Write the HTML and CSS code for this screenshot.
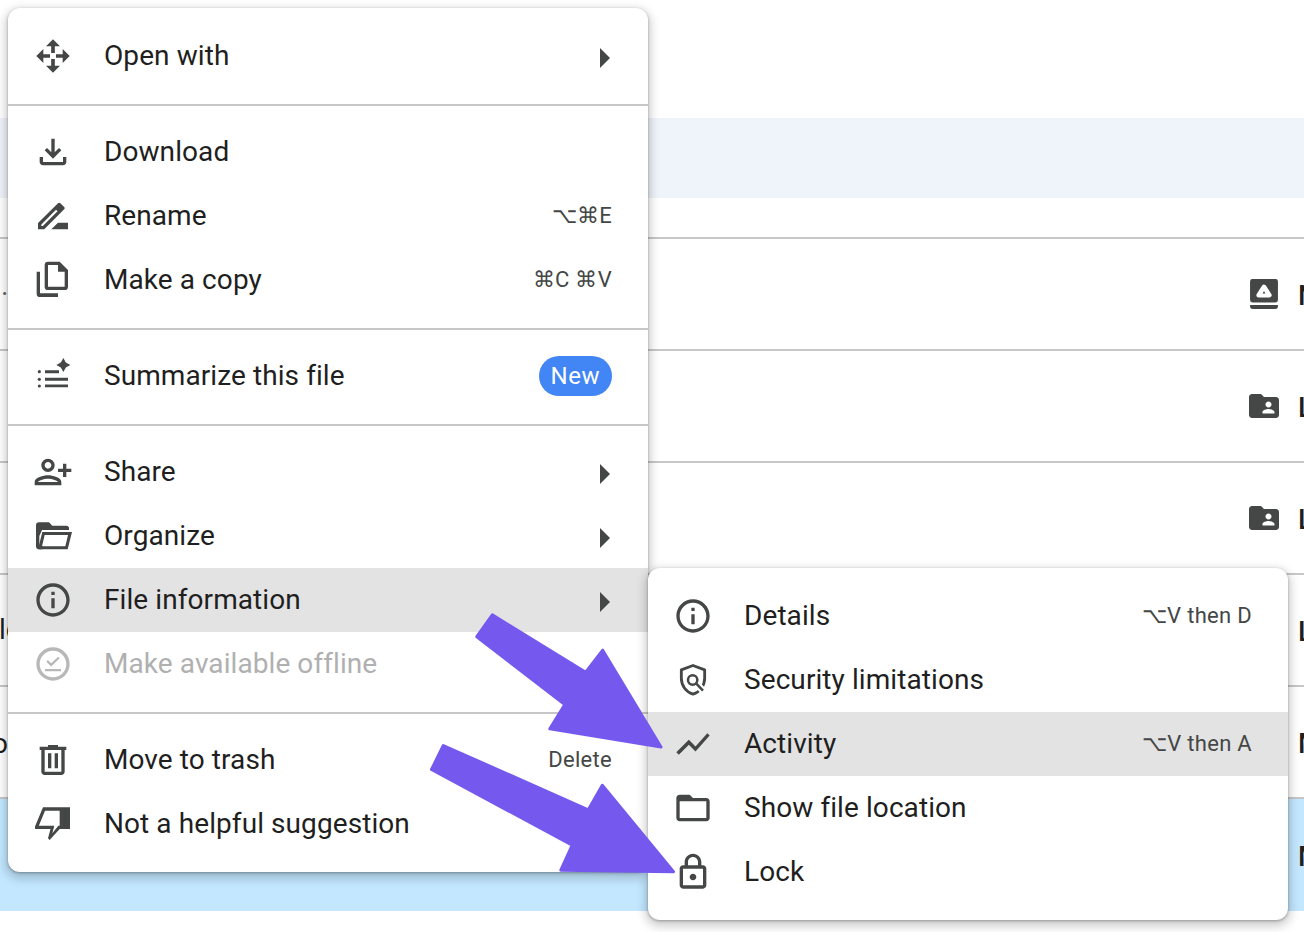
FILE: index.html
```html
<!DOCTYPE html>
<html lang="en">
<head>
<meta charset="utf-8">
<title>File menu</title>
<link rel="stylesheet" href="styles.css">
</head>
<body>
<div class="page">
  <div class="list">
    <div class="band"></div>
    <div class="gap"></div>
    <div class="row"><span class="frag frag-dot">·</span><svg class="row-icon" viewBox="0 0 24 24"><rect x="2.7" y="2" width="18.6" height="15.6" rx="1.6"/><path d="M2.7 19.3h18.6v.9a1.8 1.8 0 0 1-1.8 1.8H4.5a1.8 1.8 0 0 1-1.8-1.8z"/><path class="w" d="M12 7.2 15.600 12.800H8.400z"/><path d="M12 10 12.900 11.600H11.100z"/></svg><span class="cut">N</span></div>
    <div class="row"><span class="frag"></span><svg class="row-icon" viewBox="0 0 24 24"><path d="M20 6h-8l-2-2H4c-1.1 0-1.99.9-1.99 2L2 18c0 1.1.9 2 2 2h16c1.1 0 2-.9 2-2V8c0-1.1-.9-2-2-2zm-5 3c1.1 0 2 .9 2 2s-.9 2-2 2-2-.9-2-2 .9-2 2-2zm4 8h-8v-1c0-1.33 2.67-2 4-2s4 .67 4 2v1z"/></svg><span class="cut">L</span></div>
    <div class="row"><span class="frag"></span><svg class="row-icon" viewBox="0 0 24 24"><path d="M20 6h-8l-2-2H4c-1.1 0-1.99.9-1.99 2L2 18c0 1.1.9 2 2 2h16c1.1 0 2-.9 2-2V8c0-1.1-.9-2-2-2zm-5 3c1.1 0 2 .9 2 2s-.9 2-2 2-2-.9-2-2 .9-2 2-2zm4 8h-8v-1c0-1.33 2.67-2 4-2s4 .67 4 2v1z"/></svg><span class="cut">L</span></div>
    <div class="row"><span class="frag frag-ld">ld</span><span class="spacer"></span><span class="cut">L</span></div>
    <div class="row"><span class="frag frag-o">o</span><span class="spacer"></span><span class="cut">M</span></div>
    <div class="row row-selected"><span class="frag"></span><span class="spacer"></span><span class="cut">M</span></div>
  </div>

  <div class="menu menu-main">
    <section class="group">
      <div class="item"><svg class="icon" viewBox="0 0 24 24"><path d="M12 2 16.200 6.200H13.100V10.200H10.900V6.200H7.800zM12 22 7.800 17.800H10.900V13.800H13.100V17.800H16.200zM2 12 6.200 7.800V10.900H10.200V13.100H6.200V16.200zM22 12 17.800 16.200V13.100H13.800V10.900H17.800V7.800z"/></svg><span class="label">Open with</span><svg class="caret" viewBox="0 0 10 20"><path d="M0 0 10 10 0 20z"/></svg></div>
    </section>
    <hr class="rule">
    <section class="group">
      <div class="item"><svg class="icon" viewBox="0 0 24 24"><path d="M12 16l-5-5 1.4-1.45L11 12.15V4h2v8.15l2.6-2.6L17 11l-5 5zM6 20c-.55 0-1.02-.2-1.41-.59C4.2 19.02 4 18.55 4 18v-3h2v3h12v-3h2v3c0 .55-.2 1.02-.59 1.41-.39.39-.86.59-1.41.59H6z"/></svg><span class="label">Download</span></div>
      <div class="item"><svg class="icon" viewBox="0 0 24 24"><path d="M15 16l-4 4h10v-4z"/><path fill-rule="evenodd" d="M3 16.250 15 4.300c.4-.4 1-.4 1.400 0l2.300 2.300c.4.4.4 1 0 1.400L6.750 20H3zM5 18h.92l8.800-8.800-.92-.92L5 17.080z"/></svg><span class="label">Rename</span><span class="keys">⌥⌘E</span></div>
      <div class="item"><svg class="icon" viewBox="0 0 24 24"><path fill-rule="evenodd" d="M9 1h7l5 5v10a2 2 0 0 1-2 2H9a2 2 0 0 1-2-2V3a2 2 0 0 1 2-2zM9 3v13h10V7h-4V3z"/><path d="M2.200 7h2v13H15v2.200H4.200a2 2 0 0 1-2-2z"/></svg><span class="label">Make a copy</span><span class="keys">⌘C ⌘V</span></div>
    </section>
    <hr class="rule">
    <section class="group">
      <div class="item"><svg class="icon" viewBox="0 0 24 24"><path d="M18.200 1.200 19.700 3.900 22.400 5.400 19.700 6.900 18.200 9.600 16.700 6.900 14 5.400 16.700 3.900zM7.200 8.600h8.400v1.700H7.200zM7.200 13.100H21v1.700H7.200zM7.200 17.100H21v1.700H7.200z"/><circle cx="3.800" cy="9.400" r=".95"/><circle cx="3.800" cy="14" r=".95"/><circle cx="3.800" cy="18" r=".95"/></svg><span class="label">Summarize this file</span><span class="badge">New</span></div>
    </section>
    <hr class="rule">
    <section class="group">
      <div class="item"><svg class="icon" viewBox="0 0 24 24"><path transform="matrix(-1 0 0 1 24 0)" d="M15 12c2.21 0 4-1.79 4-4s-1.79-4-4-4-4 1.79-4 4 1.79 4 4 4zm0-6c1.1 0 2 .9 2 2s-.9 2-2 2-2-.9-2-2 .9-2 2-2zm0 8c-2.67 0-8 1.34-8 4v2h16v-2c0-2.66-5.33-4-8-4zm-6 4c.22-.72 3.31-2 6-2 2.7 0 5.8 1.29 6 2H9zm-3-3v-3h3v-2H6V7H4v3H1v2h3v3h2z"/></svg><span class="label">Share</span><svg class="caret" viewBox="0 0 10 20"><path d="M0 0 10 10 0 20z"/></svg></div>
      <div class="item"><svg class="icon" viewBox="0 0 24 24"><path d="M3.600 3.800H9.600L11.600 5.800H20a1.600 1.600 0 0 1 1.600 1.600V8.400H5.400L3.800 12V18.200H6L5.600 20H3.600A1.800 1.800 0 0 1 1.800 18.200V5.600A1.800 1.800 0 0 1 3.600 3.800z"/><path fill-rule="evenodd" d="M5.600 9.600H23.400L20.800 20H3zM7 11.400 5.400 18.200H19.400L21 11.400z"/></svg><span class="label">Organize</span><svg class="caret" viewBox="0 0 10 20"><path d="M0 0 10 10 0 20z"/></svg></div>
      <div class="item item-on"><svg class="icon" viewBox="0 0 24 24"><path d="M11 7h2v2h-2zm0 4h2v6h-2zm1-9C6.48 2 2 6.48 2 12s4.48 10 10 10 10-4.48 10-10S17.52 2 12 2zm0 18c-4.41 0-8-3.59-8-8s3.59-8 8-8 8 3.59 8 8-3.59 8-8 8z"/></svg><span class="label">File information</span><svg class="caret" viewBox="0 0 10 20"><path d="M0 0 10 10 0 20z"/></svg></div>
      <div class="item item-off"><svg class="icon" viewBox="0 0 24 24"><path d="M12 2C6.48 2 2 6.48 2 12s4.48 10 10 10 10-4.48 10-10S17.52 2 12 2zm0 18c-4.41 0-8-3.59-8-8s3.59-8 8-8 8 3.59 8 8-3.59 8-8 8zM7.200 15h9.600v1.400H7.200zM8.900 9.600 10.900 11.600 15.100 7.600 16 8.600 10.900 13.500 8 10.600z"/></svg><span class="label">Make available offline</span></div>
    </section>
    <hr class="rule">
    <section class="group">
      <div class="item"><svg class="icon" viewBox="0 0 24 24"><path d="M15 4V3H9v1H4v2h1v13c0 1.1.9 2 2 2h10c1.1 0 2-.9 2-2V6h1V4h-5zm2 15H7V6h10v13zM9 8h2v9H9zm4 0h2v9h-2z"/></svg><span class="label">Move to trash</span><span class="keys">Delete</span></div>
      <div class="item"><svg class="icon" viewBox="0 0 24 24"><path fill-rule="evenodd" d="M6 2H22.200V15H16L10 21.600 9 20.600 10.500 15H1.200V13.500zM7.200 4 3.500 13H12.800L11.600 17.500 15.200 13H16V4z"/></svg><span class="label">Not a helpful suggestion</span></div>
    </section>
  </div>

  <div class="menu menu-sub">
    <div class="item"><svg class="icon" viewBox="0 0 24 24"><path d="M11 7h2v2h-2zm0 4h2v6h-2zm1-9C6.48 2 2 6.48 2 12s4.48 10 10 10 10-4.48 10-10S17.52 2 12 2zm0 18c-4.41 0-8-3.59-8-8s3.59-8 8-8 8 3.59 8 8-3.59 8-8 8z"/></svg><span class="label">Details</span><span class="keys">⌥V then D</span></div>
    <div class="item"><svg class="icon" viewBox="0 0 24 24"><path class="line" d="M12 3.300 5 5.900V11c0 4.400 2.900 8.300 7 9.500 4.100-1.200 7-5.100 7-9.500V5.900z"/><path class="halo" d="M14 14.200 19 19.400"/><circle class="line thin" cx="11.800" cy="12" r="2.800"/><path class="line thin" d="M14 14.200 18 18.400"/></svg><span class="label">Security limitations</span></div>
    <div class="item item-on"><svg class="icon" viewBox="0 0 24 24"><path d="M3.500 18.490l6-6.010 4 4L22 6.920l-1.410-1.410-7.090 7.970-4-4L2 16.990z"/></svg><span class="label">Activity</span><span class="keys">⌥V then A</span></div>
    <div class="item"><svg class="icon" viewBox="0 0 24 24"><path d="M20 6h-8l-2-2H4c-1.100 0-1.990.900-1.990 2L2 18c0 1.100.900 2 2 2h16c1.100 0 2-.900 2-2V8c0-1.100-.900-2-2-2zm0 12H4V8h16v10z"/></svg><span class="label">Show file location</span></div>
    <div class="item"><svg class="icon" viewBox="0 0 24 24"><path d="M18 8h-1V6c0-2.760-2.240-5-5-5S7 3.240 7 6v2H6c-1.100 0-2 .900-2 2v10c0 1.100.900 2 2 2h12c1.100 0 2-.900 2-2V10c0-1.100-.900-2-2-2zM9 6c0-1.660 1.340-3 3-3s3 1.340 3 3v2H9V6zm9 14H6V10h12v10zm-6-3c1.100 0 2-.900 2-2s-.900-2-2-2-2 .900-2 2 .900 2 2 2z"/></svg><span class="label">Lock</span></div>
  </div>

  <svg class="arrows" viewBox="0 0 1304 932">
    <path d="M492.300 614.800 585.700 672.200 602.700 650.200 661 747 549.800 728.800 564.800 704.500 476.800 636.700z"/>
    <path d="M443.300 745.500 588.300 809.800 602.300 785.200 673.500 871.800 560.800 870.200 572.200 845.200 431.500 769.500z"/>
  </svg>
</div>
</body>
</html>
```

FILE: styles.css
```css
* { box-sizing: border-box; }
html, body { margin: 0; padding: 0; }
body {
  background: #fff;
  font-family: Roboto, "Liberation Sans", sans-serif;
  color: #1f1f1f;
}
.page {
  position: relative;
  width: 1304px;
  height: 932px;
  overflow: hidden;
}
.list { padding-top: 118px; }
.band { height: 80px; background: #eff3fa; }
.gap { height: 39px; }
.row {
  display: grid;
  grid-template-columns: 8px 1238px 36px 22px;
  align-items: center;
  height: 112px;
  border-top: 2px solid #c7c7c7;
}
.row-selected { height: 114px; background: #c2e7ff; }
.frag {
  width: 8px;
  overflow: hidden;
  white-space: nowrap;
  font-size: 28px;
  line-height: 36px;
}
.frag-ld { text-indent: -1px; }
.frag-o { text-indent: -8px; margin-top: 4px; }
.frag-dot { text-indent: 1px; color: #5f5f5f; }
.row-icon { width: 36px; height: 36px; fill: #444746; grid-column: 3; }
.row-icon .w { fill: #fff; stroke: #fff; stroke-width: 3; stroke-linejoin: round; }
.spacer { grid-column: 3; }
.cut {
  grid-column: 4;
  font-size: 28px;
  font-weight: 500;
  line-height: 36px;
  padding-left: 16px;
  margin-top: 4px;
  white-space: nowrap;
}
.menu {
  position: absolute;
  width: 640px;
  background: #fff;
  border-radius: 12px;
  box-shadow: 0 4px 10px 3px rgba(0, 0, 0, 0.18), 0 1px 3px rgba(0, 0, 0, 0.3);
}
.menu-main { left: 8px; top: 8px; padding: 16px 0; }
.menu-sub { left: 648px; top: 568px; padding: 16px 0; }
.group { padding: 0; }
.rule {
  height: 2px;
  margin: 16px 0 14px;
  border: 0;
  background: #c7c7c7;
}
.item {
  display: flex;
  align-items: center;
  height: 64px;
  padding: 0 36px 0 25px;
  font-size: 28px;
  letter-spacing: 0.08px;
}
.item-on { background: #e3e3e3; }
.item-off { color: #b0b0b0; }
.item-off .icon { fill: #b8b8b8; }
.icon { flex: none; width: 40px; height: 40px; fill: #444746; margin-right: 31px; }
.icon .line { fill: none; stroke: #444746; stroke-width: 1.7; stroke-linejoin: round; }
.icon .thin { stroke-width: 1.5; }
.icon .halo { fill: none; stroke: #fff; stroke-width: 4; }
.label { flex: 1; white-space: nowrap; margin-bottom: 2px; }
.keys { font-size: 22px; letter-spacing: 0.3px; color: #444746; white-space: nowrap; margin-bottom: 2px; }
.caret { flex: none; width: 10px; height: 20px; margin: 4px 2px 0 0; fill: #444746; }
.badge {
  height: 40px;
  padding: 0 12px;
  border-radius: 20px;
  background: #4285f4;
  color: #fff;
  font-size: 24px;
  letter-spacing: 0.5px;
  line-height: 40px;
}
.arrows {
  position: absolute;
  left: 0;
  top: 0;
  width: 1304px;
  height: 932px;
  fill: #7559ee;
  stroke: #7559ee;
  stroke-width: 3;
  stroke-linejoin: round;
}
```
